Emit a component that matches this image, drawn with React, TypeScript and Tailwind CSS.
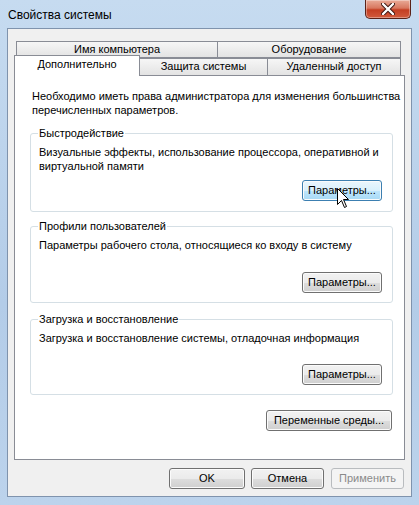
import React from 'react';

const btnBase =
  'h-[21px] rounded-[3px] border text-[11px] leading-[19px] text-center whitespace-nowrap';
const btnNormal =
  'text-black border-[#707070] shadow-[inset_0_0_0_1px_#fbfbfb] bg-[linear-gradient(to_bottom,#f2f2f2_0%,#ebebeb_50%,#dddddd_51%,#cfcfcf_100%)]';
const btnHover =
  'text-black border-[#3c7fb1] shadow-[inset_0_0_0_1px_#fbfbfb] bg-[linear-gradient(to_bottom,#eaf6fd_0%,#d9f0fc_50%,#bee6fd_51%,#a7d9f5_100%)]';
const btnDisabled = 'text-[#8a8a8a] border-[#b9bcbf] bg-[#f4f4f4]';

const Button: React.FC<{ label: string; w: string; hover?: boolean; disabled?: boolean; className?: string }> = ({
  label,
  w,
  hover,
  disabled,
  className = '',
}) => (
  <div className={`${btnBase} ${w} ${className} ${disabled ? btnDisabled : hover ? btnHover : btnNormal}`}>
    {label}
  </div>
);

const GroupBox: React.FC<{ title: string; h: string; mt: string; children: React.ReactNode }> = ({
  title,
  h,
  mt,
  children,
}) => (
  <div className={`ml-[15px] w-[363px] ${h} ${mt} rounded-[3px] border border-[#d5dfe5] flex flex-col`}>
    <div className="-mt-[8px] ml-[7px] w-fit bg-white px-[1px] leading-[14px]">{title}</div>
    {children}
  </div>
);

const tabIdle =
  'h-[17px] border border-[#898c95] bg-[linear-gradient(to_bottom,#f6f6f6,#e3e3e3)] text-center leading-[15px]';

export default function App() {
  return (
    <div className="relative w-[419px] h-[505px] flex flex-col bg-[linear-gradient(to_bottom,#c6dbf0,#b3cce8_60%,#bcd3ec)] font-['Liberation_Sans',Arial,sans-serif] text-[11px] text-black whitespace-nowrap select-none">
      {/* title bar */}
      <div className="h-[28px] flex items-start justify-between">
        <div className="pl-[8px] pt-[7px] leading-[16px] text-[12px] text-black">Свойства системы</div>
        <div className="mr-[8px] w-[46px] h-[19px] rounded-b-[5px] border border-t-0 border-[#5a2218] bg-[linear-gradient(to_bottom,#e9ab98,#d8775f_45%,#c43e22_55%,#d15a3c)] flex items-center justify-center shadow-[inset_0_0_0_1px_rgba(255,255,255,0.35)]">
          <svg width="14" height="12" viewBox="0 0 14 12">
            <path d="M2 1 L12 11 M12 1 L2 11" stroke="#3b1510" strokeWidth="4.2" strokeLinecap="round" />
            <path d="M2 1 L12 11 M12 1 L2 11" stroke="#ffffff" strokeWidth="2.4" strokeLinecap="round" />
          </svg>
        </div>
      </div>

      {/* dialog body */}
      <div className="mx-[7px] mb-[8px] flex-1 border border-[#7f93ad] bg-[#f0f0f0] flex flex-col">
        {/* tabs, back row */}
        <div className="mt-[12px] ml-[8px] flex">
          <div className={`${tabIdle} w-[202px]`}>Имя компьютера</div>
          <div className={`${tabIdle} w-[183px] border-l-0`}>Оборудование</div>
        </div>
        {/* tabs, front row */}
        <div className="ml-[6px] flex items-end h-[17px]">
          <div className="relative z-10 -mb-[1px] h-[21px] w-[126px] border border-b-0 border-[#898c95] bg-white text-center leading-[17px]">
            Дополнительно
          </div>
          <div className={`${tabIdle} w-[128px] border-l-0 border-b-0`}>Защита системы</div>
          <div className={`${tabIdle} w-[133px] border-l-0 border-b-0`}>Удаленный доступ</div>
        </div>

        {/* tab page */}
        <div className="ml-[6px] w-[391px] h-[385px] border border-[#898c95] bg-white flex flex-col">
          <div className="pl-[17px] pt-[13px] leading-[14px]">
            Необходимо иметь права администратора для изменения большинства
            <br />
            перечисленных параметров.
          </div>

          <GroupBox title="Быстродействие" h="h-[79px]" mt="mt-[16px]">
            <div className="ml-[8px] mt-[5px] leading-[14px]">
              Визуальные эффекты, использование процессора, оперативной и
              <br />
              виртуальной памяти
            </div>
            <Button label="Параметры..." w="w-[80px]" hover className="self-end mr-[10px] mt-auto mb-[10px]" />
          </GroupBox>

          <GroupBox title="Профили пользователей" h="h-[77px]" mt="mt-[14px]">
            <div className="ml-[8px] mt-[5px] leading-[14px]">
              Параметры рабочего стола, относящиеся ко входу в систему
            </div>
            <Button label="Параметры..." w="w-[80px]" className="self-end mr-[10px] mt-auto mb-[9px]" />
          </GroupBox>

          <GroupBox title="Загрузка и восстановление" h="h-[76px]" mt="mt-[16px]">
            <div className="ml-[8px] mt-[5px] leading-[14px]">
              Загрузка и восстановление системы, отладочная информация
            </div>
            <Button label="Параметры..." w="w-[80px]" className="self-end mr-[10px] mt-auto mb-[9px]" />
          </GroupBox>

          <Button label="Переменные среды..." w="w-[126px]" className="self-end mr-[12px] mt-[15px]" />
        </div>

        {/* dialog buttons */}
        <div className="mt-[8px] flex justify-end pr-[7px]">
          <Button label="OK" w="w-[76px]" />
          <Button label="Отмена" w="w-[73px]" className="ml-[6px]" />
          <Button label="Применить" w="w-[73px]" disabled className="ml-[7px]" />
        </div>
      </div>

      {/* mouse pointer over the hovered button */}
      <svg className="absolute left-[337px] top-[188px]" width="13" height="21" viewBox="0 0 13 21">
        <path
          d="M0.5 0.5 L0.5 16.5 L4.5 12.5 L7.5 19.5 L9.5 18.5 L6.5 11.5 L11.5 11.5 Z"
          fill="#ffffff"
          stroke="#000000"
          strokeWidth="1"
          strokeLinejoin="miter"
        />
      </svg>
    </div>
  );
}
